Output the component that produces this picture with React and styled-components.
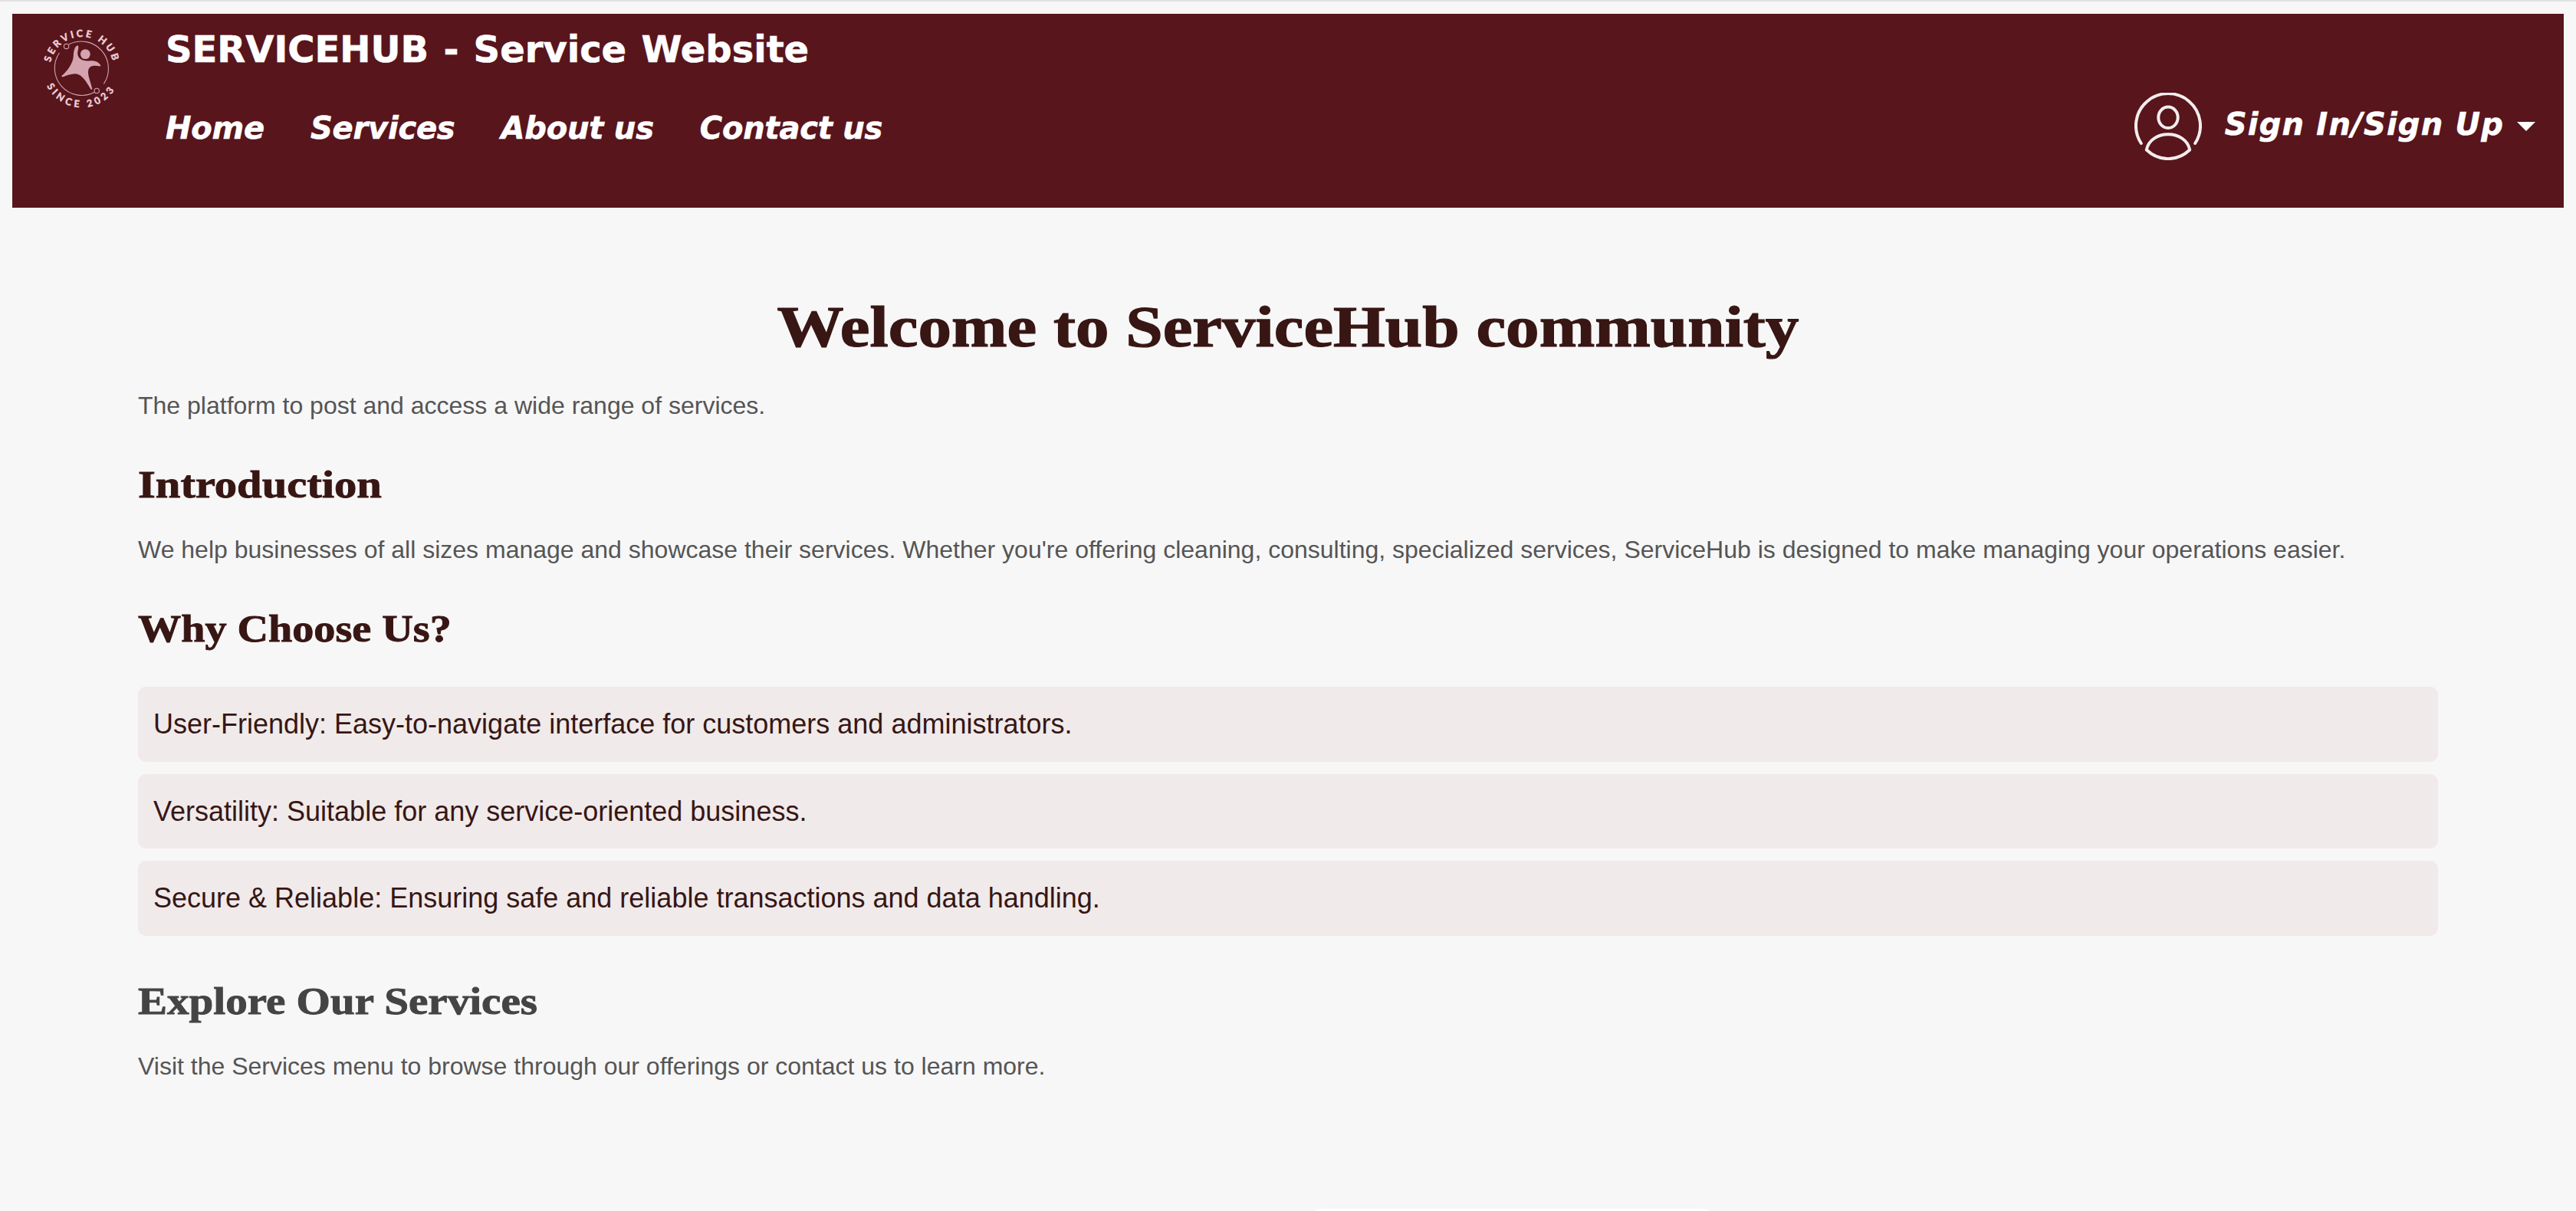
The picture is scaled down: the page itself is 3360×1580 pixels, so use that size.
import React from "react";
import styled, { createGlobalStyle } from "styled-components";

const GlobalStyle = createGlobalStyle`
  * { box-sizing: border-box; }
  body {
    margin: 0;
    background: #f7f7f7;
    font-family: "Liberation Sans", Arial, sans-serif;
    overflow: hidden;
  }
`;

const Page = styled.div`
  height: 1580px;
  overflow: hidden;
  border-top: 2px solid #e2e2e2;
  padding: 16px 16px 0;
  background: #f7f7f7;
`;

const Header = styled.header`
  display: flex;
  align-items: flex-start;
  height: 253px;
  padding-right: 37px;
  background: #58151c;
  color: #fff;
  font-family: "DejaVu Sans", Verdana, sans-serif;
  font-weight: bold;
  -webkit-text-stroke: 0.6px currentColor;
`;

const Logo = styled.svg`
  flex: none;
  width: 120px;
  height: 120px;
  margin: 11px 49px 0 31px;
  -webkit-text-stroke: 0;
`;

const Brand = styled.div`
  flex: 1;
  padding-top: 16px;
`;

const SiteTitle = styled.div`
  font-size: 48px;
  line-height: 60px;
  word-spacing: 2.6px;
`;

const Nav = styled.nav`
  display: flex;
  gap: 60px;
  margin-top: 48px;
`;

const NavLink = styled.a`
  font-size: 40px;
  line-height: 50px;
  font-style: italic;
  white-space: nowrap;
  letter-spacing: ${(p) => p.$tracking || "-0.2px"};
`;

const Account = styled.div`
  display: flex;
  align-items: center;
  padding-top: 103px;
`;

const UserIcon = styled.svg`
  width: 88px;
  height: 88px;
  margin-right: 30px;
`;

const AccountLabel = styled(NavLink)`
  margin-bottom: 6px;
`;

const Caret = styled.span`
  margin-left: 17px;
  border: 12px solid transparent;
  border-top-color: #fff;
  border-bottom: 0;
`;

const Content = styled.main`
  padding: 110px 164px 0;
`;

const Title = styled.h1`
  margin: 0 0 33px;
  text-align: center;
  font: bold 76px/90px "Liberation Serif", Georgia, serif;
  color: #371614;
  -webkit-text-stroke: 1.2px currentColor;
  transform: scaleX(1.146);
`;

const Heading = styled.h2`
  margin: 0;
  padding-top: ${(p) => p.$top}px;
  font: bold 50.5px/60px "Liberation Serif", Georgia, serif;
  color: ${(p) => p.$color || "#371614"};
  -webkit-text-stroke: 0.9px currentColor;
  transform: scaleX(${(p) => p.$stretch});
  transform-origin: left;
`;

const Text = styled.p`
  margin: ${(p) => p.$top || 0}px 0 0;
  font-size: 32px;
  line-height: 51.2px;
  color: #555;
`;

const Features = styled.ul`
  display: flex;
  flex-direction: column;
  gap: 16px;
  margin: 45.6px 0 0;
  padding: 0;
  list-style: none;
`;

const Feature = styled.li`
  padding: 20px;
  border-radius: 10px;
  background: #f0eaea;
  color: #371614;
  font-size: 36px;
  line-height: 57.6px;
`;

const Popup = styled.div`
  position: fixed;
  left: 1708px;
  top: 1577px;
  width: 528px;
  height: 60px;
  border-radius: 16px;
  background: #fff;
  box-shadow: 0 2px 50px rgba(0, 0, 0, 0.012);
`;

function ServiceHubLogo() {
  return (
    <Logo viewBox="0 0 120 120">
      <defs>
        <path id="arcTop" d="M 18.4 60.3 A 41.3 41.3 0 0 1 101 60.3" />
        <path id="arcBottom" d="M 8.7 60.3 A 51 51 0 0 0 110.7 60.3" />
      </defs>
      <g fill="none" stroke="#d3a4b0" strokeWidth="1.1">
        <path d="M43 28.8 A35.5 35.5 0 0 1 88.3 80.5" />
        <path d="M30.4 40 A35.5 35.5 0 0 0 76.4 91.3" />
        <circle cx="39.6" cy="31.4" r="3.2" fill="#58151c" />
        <circle cx="79.2" cy="89.5" r="3.2" fill="#58151c" />
      </g>
      <g fill="#d3a4b0">
        <circle cx="64.3" cy="41.6" r="6.4" />
        <path d="M54.4 30.2 C51 31 49 36 48.8 44 C48.5 53 41 64 33.5 69.8 C33 71 34 71.7 35.5 71.2 C42 69 50 65.5 56 68.5 C62 71.5 67 80 71.5 87.5 C72.5 88.5 73.5 87.7 73.1 86.2 C71 77 66.5 68 68.5 61.5 C70.5 56 77 56 83.5 57.5 C84.5 57.2 84.4 56 83.5 55 C79 50 74 50 68.5 50.5 C60 51 54 47 54.2 40 C54.3 36.5 56.5 32 54.4 30.2 Z" />
      </g>
      <g fill="#ecd0d8" stroke="#ecd0d8" strokeWidth="0.3" fontFamily="Lato, sans-serif" fontWeight="900" fontSize="12.8">
        <text letterSpacing="2.95">
          <textPath href="#arcTop" startOffset="7.8">SERVICE HUB</textPath>
        </text>
        <text letterSpacing="4.1">
          <textPath href="#arcBottom" startOffset="23.5">SINCE 2023</textPath>
        </text>
      </g>
    </Logo>
  );
}

function UserGlyph() {
  return (
    <UserIcon viewBox="0 0 88 88" fill="none" stroke="#f3eded" strokeWidth="4" strokeLinecap="round" strokeLinejoin="round">
      <path d="M8.8 66 A42 42 0 1 1 79.2 66" />
      <ellipse cx="44" cy="32.3" rx="12.7" ry="13.7" />
      <path d="M15.8 74.5 C21 47.5 67 47.5 72.2 74.5 C56 90 32 90 15.8 74.5 Z" />
    </UserIcon>
  );
}

const links = ["Home", "Services", "About us", "Contact us"];

const features = [
  "User-Friendly: Easy-to-navigate interface for customers and administrators.",
  "Versatility: Suitable for any service-oriented business.",
  "Secure & Reliable: Ensuring safe and reliable transactions and data handling.",
];

export default function App() {
  return (
    <Page>
      <GlobalStyle />
      <Header>
        <ServiceHubLogo />
        <Brand>
          <SiteTitle>SERVICEHUB - Service Website</SiteTitle>
          <Nav>
            {links.map((l) => (
              <NavLink key={l}>{l}</NavLink>
            ))}
          </Nav>
        </Brand>
        <Account>
          <UserGlyph />
          <AccountLabel $tracking="1.2px">Sign In/Sign Up</AccountLabel>
          <Caret />
        </Account>
      </Header>
      <Content>
        <Title>Welcome to ServiceHub community</Title>
        <Text>The platform to post and access a wide range of services.</Text>
        <Heading $top={47} $stretch={1.16}>Introduction</Heading>
        <Text $top={30}>
          We help businesses of all sizes manage and showcase their services. Whether you're offering cleaning,
          consulting, specialized services, ServiceHub is designed to make managing your operations easier.
        </Text>
        <Heading $top={47} $stretch={1.112}>Why Choose Us?</Heading>
        <Features>
          {features.map((f) => (
            <Feature key={f}>{f}</Feature>
          ))}
        </Features>
        <Heading $top={55} $stretch={1.13} $color="#444">Explore Our Services</Heading>
        <Text $top={30}>Visit the Services menu to browse through our offerings or contact us to learn more.</Text>
      </Content>
      <Popup />
    </Page>
  );
}
